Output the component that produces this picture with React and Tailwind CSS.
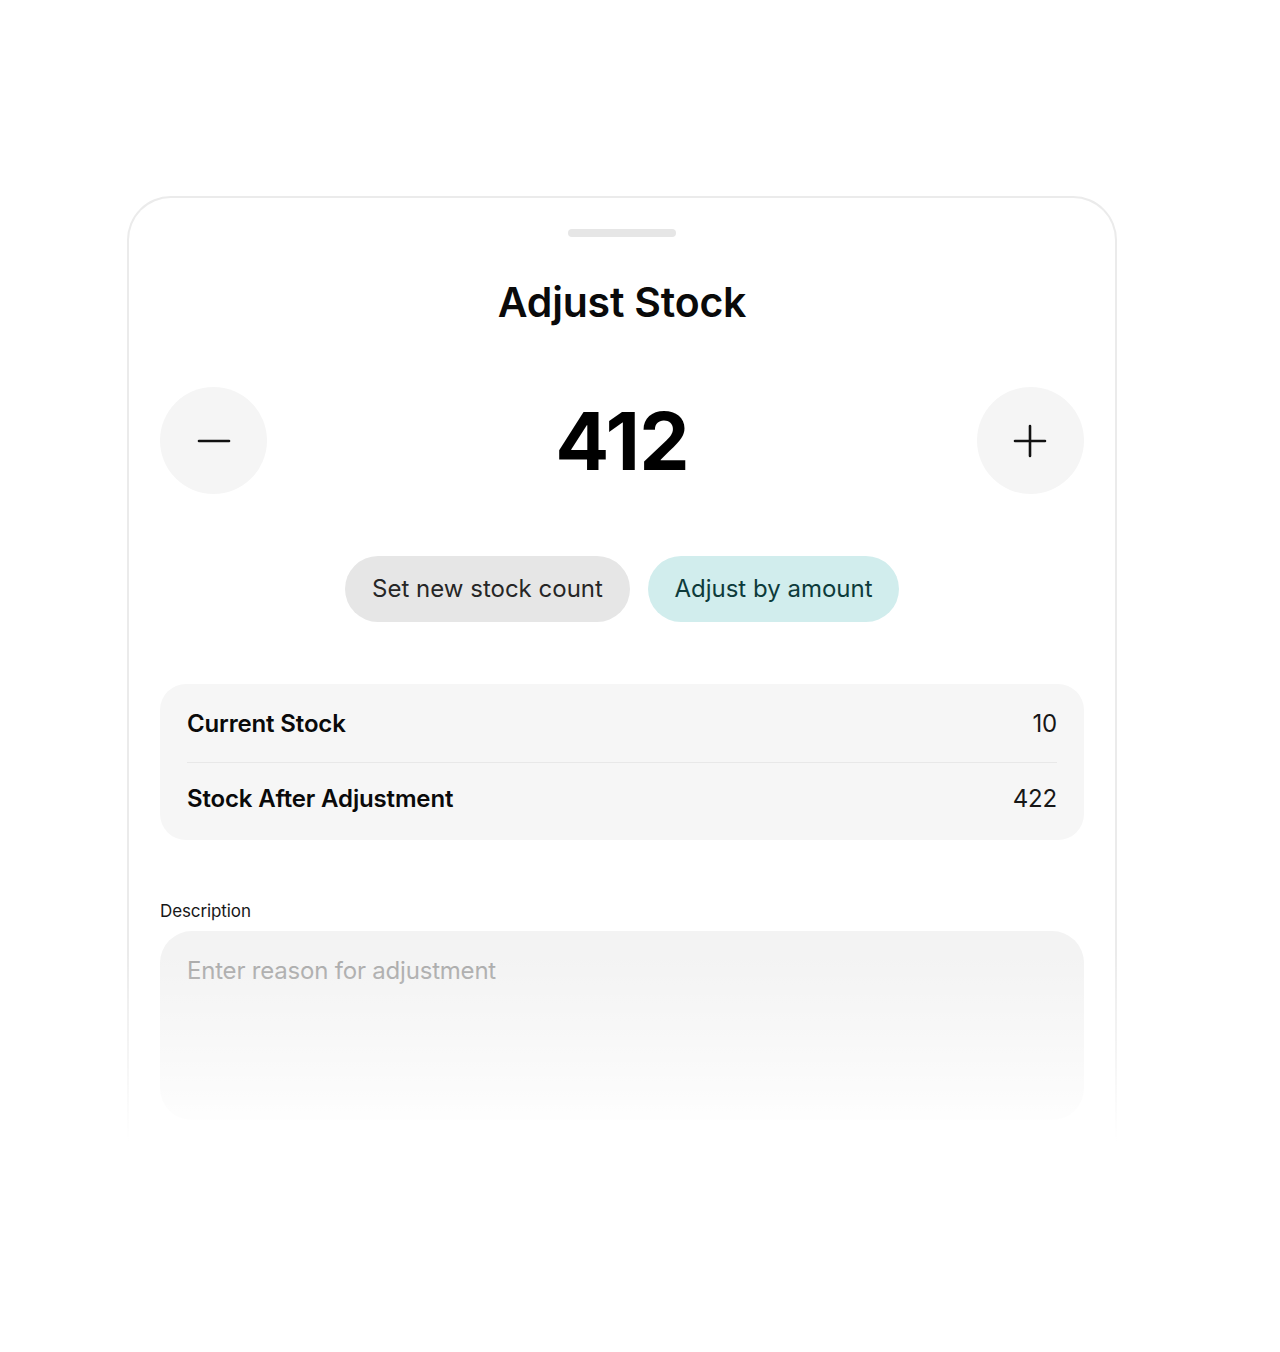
import React from "react";

const FONT = { fontFamily: "Inter, 'Liberation Sans', sans-serif" };

function Minus() {
  return (
    <svg width="34" height="34" viewBox="0 0 34 34" fill="none">
      <path d="M2 17h30" stroke="#111" strokeWidth="2.6" strokeLinecap="round" />
    </svg>
  );
}

function Plus() {
  return (
    <svg width="34" height="34" viewBox="0 0 34 34" fill="none">
      <path d="M2 17h30M17 2v30" stroke="#111" strokeWidth="2.6" strokeLinecap="round" />
    </svg>
  );
}

export default function App() {
  return (
    <div className="min-h-[1352px] w-[1280px] bg-white pt-[196px]" style={FONT}>
      <div className="relative ml-[127px] w-[990px] h-[945px] overflow-hidden">
        <div className="h-full rounded-t-[44px] border-2 border-b-0 border-[#ebebeb] bg-white px-[31px] pt-[31px]">
          <div className="mx-auto h-2 w-[108px] rounded-full bg-[#e6e6e6]" />

          <h1 className="mt-[41px] text-center text-[41px] leading-[48px] font-semibold tracking-[-0.2px] text-[#0a0a0a]">
            Adjust Stock
          </h1>

          <div className="mt-[61px] flex items-center justify-between">
            <button className="flex h-[107px] w-[107px] items-center justify-center rounded-full bg-[#f5f5f5]">
              <Minus />
            </button>
            <div className="text-[80px] leading-none font-bold tracking-[-0.8px] text-black">412</div>
            <button className="flex h-[107px] w-[107px] items-center justify-center rounded-full bg-[#f5f5f5]">
              <Plus />
            </button>
          </div>

          <div className="mt-[62px] flex justify-center gap-[18px]">
            <button className="h-[66px] w-[285px] rounded-full bg-[#e6e6e6] text-[24px] text-[#262626]">
              Set new stock count
            </button>
            <button className="h-[66px] w-[251px] rounded-full bg-[#d1eded] text-[24px] text-[#0d3b3b]">
              Adjust by amount
            </button>
          </div>

          <div className="mt-[62px] rounded-[26px] bg-[#f6f6f6] px-[27px]">
            <div className="flex items-center justify-between pt-6 pb-[22px] text-[24px] leading-8 tracking-[-0.15px]">
              <span className="font-semibold text-[#0a0a0a]">Current Stock</span>
              <span className="text-[#171717]">10</span>
            </div>
            <div className="h-px bg-[#e8e8e8]" />
            <div className="flex items-center justify-between pt-5 pb-[25px] text-[24px] leading-8 tracking-[-0.15px]">
              <span className="font-semibold text-[#0a0a0a]">Stock After Adjustment</span>
              <span className="text-[#171717]">422</span>
            </div>
          </div>

          <div className="mt-[59px] text-[17px] leading-6 tracking-[-0.1px] text-[#171717]">Description</div>
          <div className="mt-2 h-[189px] rounded-[32px] bg-[#f3f3f3] px-[27px] pt-6">
            <div className="text-[24px] leading-8 tracking-[-0.2px] text-[#a8a8a8]">Enter reason for adjustment</div>
          </div>
        </div>
        <div className="pointer-events-none absolute inset-x-0 bottom-0 h-[190px] bg-gradient-to-b from-white/0 via-white/45 to-white" />
      </div>
    </div>
  );
}
